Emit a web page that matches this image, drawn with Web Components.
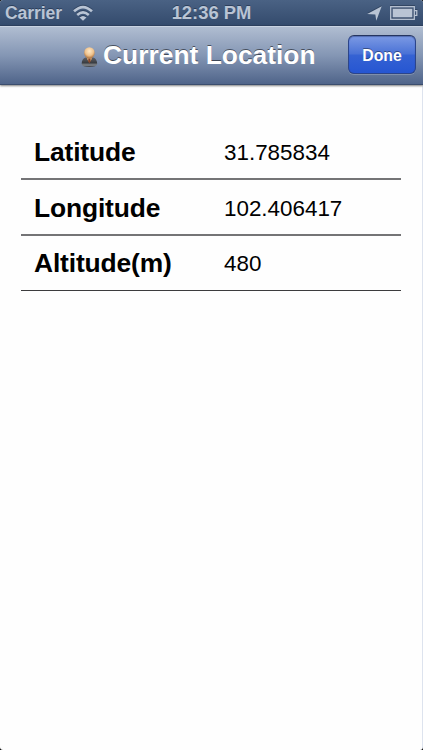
<!DOCTYPE html>
<html lang="en">
<head>
<meta charset="utf-8">
<title>Current Location</title>
<style>
  body {
    margin: 0;
    background: #000;
    font-family: "Liberation Sans", Arial, sans-serif;
  }
</style>
</head>
<body>
<phone-screen>
  <status-bar carrier="Carrier" time="12:36 PM"></status-bar>
  <nav-bar>
    <person-icon></person-icon>
    <span>Current Location</span>
    <nav-button slot="action">Done</nav-button>
  </nav-bar>
  <location-list>
    <location-row label="Latitude">31.785834</location-row>
    <location-row label="Longitude">102.406417</location-row>
    <location-row label="Altitude(m)">480</location-row>
  </location-list>
</phone-screen>

<script>
// Full screen with the rounded display corners
class PhoneScreen extends HTMLElement {
  constructor() {
    super();
    this.attachShadow({ mode: 'open' });
    this.shadowRoot.innerHTML = `
      <style>
        :host {
          display: flex;
          flex-direction: column;
          box-sizing: border-box;
          height: 750px;
          border-radius: 3px;
          overflow: hidden;
          background: linear-gradient(#dde3ee, #dde3ee) right / 1px 100% no-repeat, #fefefe;
        }
      </style>
      <slot></slot>
    `;
  }
}

class StatusBar extends HTMLElement {
  constructor() {
    super();
    this.attachShadow({ mode: 'open' });
  }

  connectedCallback() {
    this.shadowRoot.innerHTML = `
      <style>
        :host {
          display: grid;
          grid-template-columns: 1fr auto 1fr;
          align-items: center;
          box-sizing: border-box;
          height: 26px;
          padding: 1px 5px 0 5px;
          background: linear-gradient(#4a6284, #344b6d);
          border-bottom: 1px solid #2e4261;
          color: #b9c4d4;
          font-size: 18.4px;
          font-weight: bold;
          line-height: 24px;
          text-shadow: 0 -1px 0 rgba(30, 45, 70, .6);
        }
        .left, .right { display: flex; align-items: center; }
        .left { gap: 11px; }
        .carrier { font-size: 17.6px; letter-spacing: -0.1px; }
        .right { justify-content: flex-end; gap: 8px; }
        svg { display: block; fill: #b9c4d4; filter: drop-shadow(0 -1px 0 rgba(30, 45, 70, .5)); }
      </style>
      <div class="left">
        <span class="carrier">${this.getAttribute('carrier')}</span>
        <svg width="20" height="16" viewBox="0 0 20 16">
          <path d="M10 15.8L6.5 12.6Q10 9.6 13.5 12.6Z"/>
          <path d="M4.2 9.9Q10 5 15.8 9.9M1 6.3Q10 -2.2 19 6.3" fill="none" stroke="#b9c4d4" stroke-width="2.6"/>
        </svg>
      </div>
      <span>${this.getAttribute('time')}</span>
      <div class="right">
        <svg width="15" height="15" viewBox="0 0 15 15">
          <path d="M14.7 0.2L9.3 14.8L8.3 8.6L0.2 8Z"/>
        </svg>
        <svg width="28" height="14" viewBox="0 0 28 14">
          <rect x="0.7" y="0.7" width="23.6" height="12.6" fill="none" stroke="#b9c4d4" stroke-width="1.3"/>
          <rect x="2.7" y="2.7" width="19.6" height="8.6"/>
          <path d="M24.5 4.7H26.8V9.3H24.5" fill="none" stroke="#b9c4d4" stroke-width="1.3"/>
        </svg>
      </div>
    `;
  }
}

class NavBar extends HTMLElement {
  constructor() {
    super();
    this.attachShadow({ mode: 'open' });
    this.shadowRoot.innerHTML = `
      <style>
        :host {
          display: flex;
          align-items: center;
          justify-content: space-between;
          box-sizing: border-box;
          height: 59px;
          padding: 0 7px 2px 80px;
          border-top: 1px solid #c9d3e2;
          border-bottom: 1px solid #3b4d6d;
          background: linear-gradient(#b0bdd1, #8496b4 50%, #4f6489);
          box-shadow: 0 1px 2px rgba(0, 0, 0, .5);
        }
        .title {
          display: flex;
          align-items: center;
          gap: 4px;
          color: #fff;
          font-size: 26.4px;
          font-weight: bold;
          line-height: 30px;
          white-space: nowrap;
          text-shadow: 0 -1px 0 rgba(0, 0, 0, .5);
        }
      </style>
      <div class="title"><slot></slot></div>
      <slot name="action"></slot>
    `;
  }
}

class NavButton extends HTMLElement {
  constructor() {
    super();
    this.attachShadow({ mode: 'open' });
    this.shadowRoot.innerHTML = `
      <style>
        :host { display: block; }
        button {
          display: block;
          box-sizing: border-box;
          width: 68px;
          height: 39px;
          padding: 2px 0 0;
          border: 1px solid #2c458a;
          border-top-color: #25355f;
          border-radius: 6px;
          background: linear-gradient(#7c9ae4, #4a72d6 48%, #3562d3 52%, #2656d2);
          box-shadow: inset 0 1px 1px rgba(20, 40, 100, .4), 0 1px 0 rgba(255, 255, 255, .2);
          color: #fff;
          font: bold 15.8px "Liberation Sans", Arial, sans-serif;
          text-shadow: 0 -1px 0 rgba(0, 0, 0, .4);
        }
      </style>
      <button><slot></slot></button>
    `;
  }
}

// Small bust of a man in a dark suit
class PersonIcon extends HTMLElement {
  constructor() {
    super();
    this.attachShadow({ mode: 'open' });
    this.shadowRoot.innerHTML = `
      <style>
        :host { display: block; padding-top: 4px; }
        svg { display: block; }
      </style>
      <svg width="19" height="22" viewBox="0 0 19 22">
        <defs>
          <radialGradient id="face" cx=".5" cy=".35" r=".6">
            <stop offset="0" stop-color="#ffe9c6"/>
            <stop offset=".65" stop-color="#efc28c"/>
            <stop offset="1" stop-color="#b67e4a"/>
          </radialGradient>
          <linearGradient id="suit" x2="0" y2="1">
            <stop offset="0" stop-color="#5d6066"/>
            <stop offset=".55" stop-color="#3a3d42"/>
            <stop offset=".8" stop-color="#85898e"/>
            <stop offset="1" stop-color="#33363b"/>
          </linearGradient>
        </defs>
        <path d="M1.6 18Q1.8 12.6 5.6 11.5L13.2 11.5Q17 12.6 17.2 18Q16.8 21 9.4 21Q2 21 1.6 18Z" fill="url(#suit)"/>
        <path d="M6.4 10.5H12.4L11.6 13.4L9.4 16.4L7.2 13.4Z" fill="#c4966a"/>
        <path d="M8.6 12.5H10.2L10.6 15.6L9.4 17.4L8.2 15.6Z" fill="#85452b"/>
        <ellipse cx="9.4" cy="6.8" rx="5.3" ry="5.6" fill="url(#face)"/>
      </svg>
    `;
  }
}

class LocationList extends HTMLElement {
  constructor() {
    super();
    this.attachShadow({ mode: 'open' });
    this.shadowRoot.innerHTML = `
      <style>
        :host {
          display: flex;
          flex-direction: column;
          padding: 39px 22px 0 21px;
        }
        ::slotted(:last-child) {
          --row-height: 55px;
          --row-line: 1px solid #3c3c3e;
          --row-pad: 0;
        }
      </style>
      <slot></slot>
    `;
  }
}

class LocationRow extends HTMLElement {
  constructor() {
    super();
    this.attachShadow({ mode: 'open' });
  }

  connectedCallback() {
    this.shadowRoot.innerHTML = `
      <style>
        :host {
          display: grid;
          grid-template-columns: 190px 1fr;
          align-items: center;
          box-sizing: border-box;
          height: var(--row-height, 56px);
          padding: var(--row-pad, 2px) 0 0 13px;
          border-bottom: var(--row-line, 2px solid #747476);
          color: #000;
        }
        .label { font-size: 26.4px; font-weight: bold; letter-spacing: -0.15px; }
        .value { padding-top: 1px; font-size: 22.4px; }
      </style>
      <span class="label">${this.getAttribute('label')}</span>
      <span class="value"><slot></slot></span>
    `;
  }
}

customElements.define('phone-screen', PhoneScreen);
customElements.define('status-bar', StatusBar);
customElements.define('nav-bar', NavBar);
customElements.define('nav-button', NavButton);
customElements.define('person-icon', PersonIcon);
customElements.define('location-list', LocationList);
customElements.define('location-row', LocationRow);
</script>
</body>
</html>
